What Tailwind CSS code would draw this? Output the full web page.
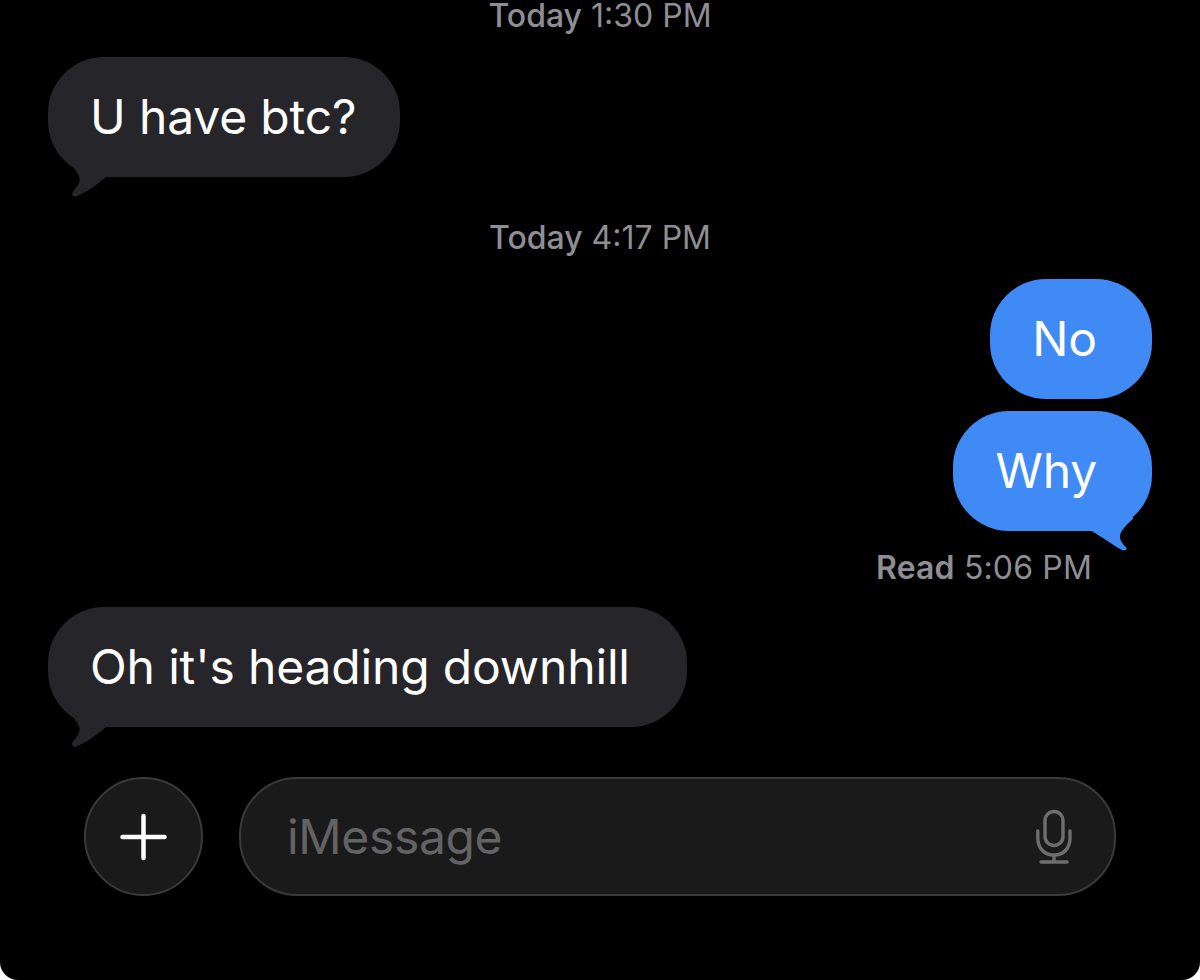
<!DOCTYPE html>
<html lang="en">
<head>
    <meta charset="UTF-8">
    <meta name="viewport" content="width=device-width, initial-scale=1.0">
    <title>Messages</title>
    <script src="https://cdn.jsdelivr.net/npm/@tailwindcss/browser@4"></script>
</head>
<body class="bg-white font-['Inter',sans-serif]">
    <div class="h-[980px] overflow-hidden bg-black rounded-b-[18px] flex flex-col">
        <!-- first exchange -->
        <p class="h-[30px] leading-[32px] text-center text-[32px] text-[#8e8e93]"><span class="font-medium">Today</span> 1:30 PM</p>

        <div class="relative self-start ml-[48px] mt-[27px] h-[120px] rounded-[56px] bg-[#26252a] pl-[42px] pr-[44px] flex items-center text-[48px] text-white tracking-[-0.15px]">
            <svg class="absolute left-[20px] top-[100px]" width="50" height="42" viewBox="0 0 50 42" fill="#26252a"><path d="M6 0V11C8.5 15 12.5 19 11.5 24C10.5 29 6.5 32 4.5 35.5C3.5 38 5 40.5 7.5 39.5C18 36 30 27 38 20H44V0Z"/></svg>
            <span class="relative">U have btc?</span>
        </div>

        <p class="mt-[45px] h-[30px] leading-[32px] text-center text-[32px] text-[#8e8e93]"><span class="font-medium">Today</span> 4:17 PM</p>

        <!-- sent -->
        <div class="self-end mr-[48px] mt-[27px] h-[120px] rounded-[56px] bg-[#408af5] pl-[42px] pr-[55px] flex items-center text-[48px] text-white tracking-[-0.15px]">No</div>
        <div class="relative self-end mr-[48px] mt-[12px] h-[120px] rounded-[56px] bg-[#408af5] pl-[42px] pr-[55px] flex items-center text-[48px] text-white tracking-[-0.15px]">
            <svg class="absolute right-[7px] top-[94px]" width="60" height="48" viewBox="0 0 60 48" fill="#408af5"><path d="M0 0V26H5C8 26 10 28 13 30C20 34 28 40 35 44C38 46 42 46 41.5 43C39 40 34.5 36 35 31C35.5 26 41 20 48 14L46 0Z"/></svg>
            <span class="relative">Why</span>
        </div>
        <p class="self-end mr-[108px] mt-[21px] h-[30px] leading-[32px] text-[32px] text-[#8e8e93] tracking-[0.15px]"><span class="font-semibold">Read</span> 5:06 PM</p>

        <div class="relative self-start ml-[48px] mt-[25px] h-[120px] rounded-[56px] bg-[#26252a] pl-[42px] pr-[57px] flex items-center text-[48px] text-white tracking-[-0.15px]">
            <svg class="absolute left-[20px] top-[100px]" width="50" height="42" viewBox="0 0 50 42" fill="#26252a"><path d="M6 0V11C8.5 15 12.5 19 11.5 24C10.5 29 6.5 32 4.5 35.5C3.5 38 5 40.5 7.5 39.5C18 36 30 27 38 20H44V0Z"/></svg>
            <span class="relative">Oh it's heading downhill</span>
        </div>

        <!-- input bar -->
        <div class="mt-[50px] ml-[84px] mr-[84px] flex gap-[36px]">
            <div class="w-[119px] h-[119px] shrink-0 rounded-full bg-[#1a1a1a] border-2 border-[#3a3a3a] flex items-center justify-center">
                <svg width="48" height="48" viewBox="0 0 48 48" fill="none" stroke="#ffffff" stroke-width="4.5" stroke-linecap="round"><path d="M23.5 3V45M2.5 24H44.5"/></svg>
            </div>
            <div class="flex-1 h-[119px] rounded-[58px] bg-[#1a1a1a] border-2 border-[#3a3a3a] pl-[46px] pr-[40px] flex items-center justify-between">
                <span class="text-[48px] text-[#636366] tracking-[-0.35px]">iMessage</span>
                <svg width="40" height="58" viewBox="0 0 40 58" fill="none" stroke="#6e6e6e" stroke-width="3.4" stroke-linecap="round"><rect x="11" y="3.5" width="18" height="34" rx="9"/><path d="M3.8 23V30C3.8 40 10 47 20 47C30 47 36 40 36 30V23M20 47V54M7 54H33"/></svg>
            </div>
        </div>
    </div>
</body>
</html>
